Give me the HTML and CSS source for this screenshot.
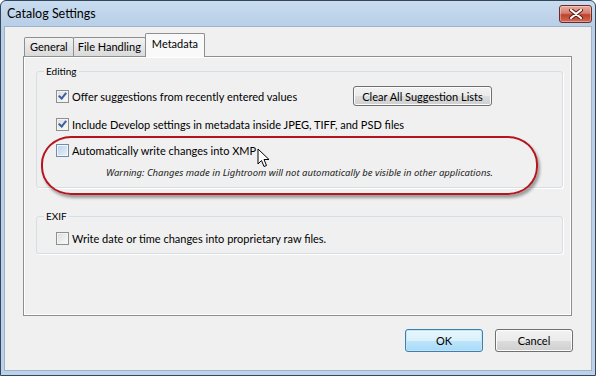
FILE: index.html
```html
<!DOCTYPE html>
<html lang="en">
<head>
    <meta charset="UTF-8">
    <title>Catalog Settings</title>
    <link rel="stylesheet" href="styles.css">
</head>
<body>
    <div class="window">
        <div class="titlebar">
            <span class="title">Catalog Settings</span>
            <button class="close-btn">
                <svg width="14" height="10" viewBox="0 0 14 10">
                    <path d="M2 1 L12 9 M12 1 L2 9" stroke="#5a1a14" stroke-width="4" stroke-linecap="round"/>
                    <path d="M2 1 L12 9 M12 1 L2 9" stroke="#fff" stroke-width="2.2" stroke-linecap="round"/>
                </svg>
            </button>
        </div>

        <div class="client">
            <!-- Tabs -->
            <div class="tabs">
                <div class="tab">General</div>
                <div class="tab">File Handling</div>
                <div class="tab active">Metadata</div>
            </div>

            <div class="panel">
                <fieldset class="group editing">
                    <legend>Editing</legend>
                    <div class="row">
                        <label class="check"><span class="box checked"></span>Offer suggestions from recently entered values</label>
                        <button class="button suggest">Clear All Suggestion Lists</button>
                    </div>
                    <div class="row second">
                        <label class="check"><span class="box checked"></span>Include Develop settings in metadata inside JPEG, TIFF, and PSD files</label>
                    </div>
                    <div class="row third">
                        <label class="check"><span class="box empty"></span>Automatically write changes into XMP</label>
                    </div>
                    <p class="warning">Warning: Changes made in Lightroom will not automatically be visible in other applications.</p>

                    <!-- annotation over the dialog -->
                    <div class="highlight"></div>
                    <svg class="cursor" width="14" height="20" viewBox="0 0 14 20">
                        <path d="M1 1 L1 16 L4.5 12.5 L7 18.5 L9.5 17.5 L7 11.5 L12 11.5 Z" fill="#fff" stroke="#000" stroke-width="1" stroke-linejoin="round"/>
                    </svg>
                </fieldset>

                <fieldset class="group exif">
                    <legend>EXIF</legend>
                    <div class="row">
                        <label class="check"><span class="box"></span>Write date or time changes into proprietary raw files.</label>
                    </div>
                </fieldset>
            </div>

            <div class="footer">
                <button class="button ok">OK</button>
                <button class="button">Cancel</button>
            </div>
        </div>
    </div>
</body>
</html>
```

FILE: styles.css
```css
body {
    margin: 0;
    font-family: Lato, "Noto Sans", sans-serif;
    font-size: 11px;
    color: #000;
}

.window {
    width: 596px;
    height: 376px;
    box-sizing: border-box;
    border: 1px solid #34475c;
    border-radius: 6px 6px 0 0;
    background: linear-gradient(#c9dcf0, #b8cfe7 25px, #bcd2ea);
    padding: 0 3px 4px 3px;
    display: flex;
    flex-direction: column;
}

.titlebar {
    height: 25px;
    display: flex;
    align-items: flex-start;
    justify-content: space-between;
}

.title {
    font-size: 12.5px;
    margin: 5px 0 0 3px;
    color: #000;
}

.close-btn {
    width: 33px;
    height: 18px;
    margin-top: 4px;
    border: 1px solid #6b2a26;
    border-radius: 3px;
    background: linear-gradient(#e9aa9f, #d47f6f 45%, #c1402f 55%, #d16a55);
    display: flex;
    align-items: center;
    justify-content: center;
    padding: 0;
    box-shadow: inset 0 0 0 1px rgba(255, 255, 255, 0.35);
}

.client {
    flex: 1;
    background-color: #f0f0f0;
    border: 1px solid #9fb2c6;
    padding: 6px 19px 0 18px;
}

/* Tabs */
.tabs {
    display: flex;
    align-items: flex-end;
    height: 23px;
    padding-left: 1px;
}

.tab {
    height: 18px;
    line-height: 18px;
    padding: 0 4px;
    border: 1px solid #8e8f8f;
    border-bottom: none;
    margin-right: -1px;
    background: linear-gradient(#f2f2f2, #e6e6e6 50%, #dadada);
    border-radius: 2px 2px 0 0;
}

.tab:first-child {
    padding: 0 5px;
}

.tab.active {
    line-height: 19px;
    padding: 0 6px;
    background: #f9f9f9;
    position: relative;
    z-index: 1;
    margin-bottom: -1px;
    height: 23px;
}

.panel {
    height: 260px;
    box-sizing: border-box;
    border: 1px solid #8e8f8f;
    box-shadow: inset 1px 1px 0 #fff, inset -1px -1px 0 #fff;
    background-color: #f0f0f0;
    padding: 8px 8px 0 12px;
}

.group {
    position: relative;
    margin: 0;
    border: 1px solid #d5dfe5;
    border-radius: 3px;
    box-shadow: 1px 1px 0 #fff;
    padding: 9px 0 7px 19px;
}

.group legend {
    font-size: 10px;
    line-height: 12px;
    padding: 0 2px;
    margin-left: -12px;
}

.exif {
    margin-top: 22px;
    padding-top: 6px;
    padding-bottom: 5px;
}

.row {
    display: flex;
    align-items: center;
    height: 20px;
}

.row.second {
    margin-top: 8px;
}

.row.third {
    margin-top: 6px;
}

.check {
    display: flex;
    align-items: center;
}

.box {
    width: 11px;
    height: 11px;
    border: 1px solid #8e8f8f;
    background: linear-gradient(135deg, #dcdcdc, #fbfbfb);
    box-shadow: inset 0 0 0 1px #f4f4f4;
    margin-right: 3px;
    position: relative;
}

.box.empty {
    border-color: #6e8db0;
    background: linear-gradient(135deg, #b9d0e8, #eaf3fb);
}

.box.checked::after {
    content: "";
    position: absolute;
    left: 3px;
    top: 0px;
    width: 3px;
    height: 6px;
    border: solid #3b5fa0;
    border-width: 0 2px 2px 0;
    transform: rotate(40deg);
}

.button {
    font-family: inherit;
    font-size: 11px;
    height: 20px;
    border: 1px solid #707070;
    border-radius: 3px;
    background: linear-gradient(#f2f2f2, #ebebeb 50%, #dddddd 51%, #cfcfcf);
    box-shadow: inset 0 0 0 1px #fcfcfc;
    padding: 0 4px;
    color: #000;
    white-space: nowrap;
}

.suggest {
    width: 139px;
    margin-left: auto;
    margin-right: 70px;
}

.warning {
    margin: 6px 0 0 -19px;
    height: 14px;
    line-height: 14px;
    text-align: center;
    font-family: "Noto Sans", sans-serif;
    font-style: italic;
    font-size: 9.5px;
    color: #222;
}

.highlight {
    position: absolute;
    left: 4px;
    top: 59px;
    width: 493px;
    height: 55px;
    border: 2px solid #b5151d;
    border-radius: 30px / 28px;
    box-shadow: 2px 3px 3px rgba(0, 0, 0, 0.35);
}

.cursor {
    position: absolute;
    left: 220px;
    top: 71px;
}

.footer {
    display: flex;
    justify-content: flex-end;
    gap: 12px;
    margin-top: 13px;
    margin-right: -1px;
}

.footer .button {
    width: 78px;
    height: 23px;
}

.button.ok {
    border-color: #3c7fb1;
    background: linear-gradient(#eaf6fd, #d9f0fc 50%, #bee6fd 51%, #a7d9f5);
    box-shadow: inset 0 0 0 1px #c6e4f4;
}
```
